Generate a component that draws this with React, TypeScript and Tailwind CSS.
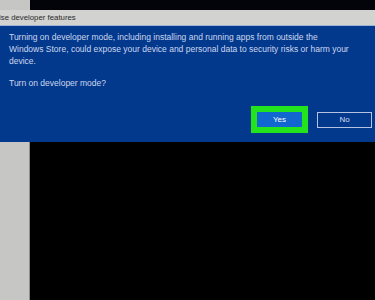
export default function App() {
  return (
    <div className="flex h-[300px] w-[375px] flex-col overflow-hidden bg-black font-['Liberation_Sans',sans-serif]">
      <div className="flex h-[10px]">
        <div className="w-[30px] bg-[#c6c6c4]" />
        <div className="flex-1 bg-[#03030a]" />
      </div>

      <div className="flex h-[16px] items-center border-b border-[#9fb3d6] bg-[#d2d2d0] text-[7.8px] text-[#2a2a2a]">
        <span className="-ml-[1px]">lse developer features</span>
      </div>

      <div className="flex h-[116px] flex-col bg-[#03398c] pl-[9px] pr-[3px] pt-[5px] pb-[9px] text-[8.5px] leading-[12px] text-[#ccd7ee]">
        <p>
          Turning on developer mode, including installing and running apps from outside the
          <br />
          Windows Store, could expose your device and personal data to security risks or harm your
          <br />
          device.
        </p>
        <p className="mt-[10px]">Turn on developer mode?</p>

        <div className="mt-auto flex items-center justify-end gap-[9px]">
          <div className="bg-[#22e31c] p-[6px]">
            <div className="flex h-[15px] w-[45px] items-center justify-center bg-[#1266d0] text-[8px] text-white">
              Yes
            </div>
          </div>
          <div className="flex h-[16px] w-[55px] items-center justify-center border-[1.5px] border-[#b5c3e2] text-[8px] text-[#d4ddf0]">
            No
          </div>
        </div>
      </div>

      <div className="flex flex-1">
        <div className="w-[30px] border-r border-[#8e8e8c] bg-[#c6c6c4]" />
        <div className="flex-1 bg-black" />
      </div>
    </div>
  )
}
